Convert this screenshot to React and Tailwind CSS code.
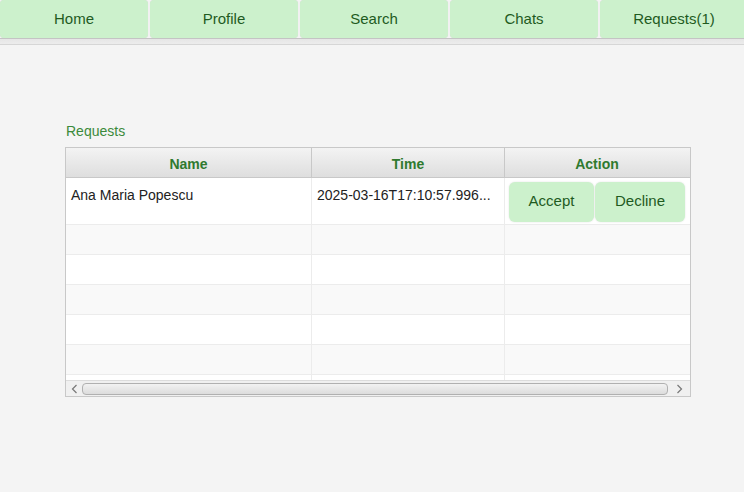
import React from "react";

const tabs = ["Home", "Profile", "Search", "Chats", "Requests(1)"];
const emptyRows = [1, 2, 3, 4, 5, 6];

const App = () => {
  return (
    <main className="w-full min-h-screen flex flex-col bg-[#f4f4f4] font-['Liberation_Sans',Arial,sans-serif]">
      {/* top nav */}
      <nav className="flex gap-[2px] h-[39px] border-b border-[#c4c4c4] overflow-hidden">
        {tabs.map(tab => (
          <button
            key={tab}
            className="w-[148px] shrink-0 h-[38px] rounded-[4px] bg-[#ccf1cc] text-[15px] text-[#1f5b1f] shadow-[0_0_1px_rgba(0,0,0,0.15)]"
          >
            {tab}
          </button>
        ))}
      </nav>
      <div className="h-[6px] bg-gradient-to-b from-[#e6e6e6] to-[#ececec] border-b border-[#d6d6d6]" />

      <section className="ml-[65px] w-[626px] mt-[78px] flex flex-col">
        <span className="text-[14px] leading-[16px] text-[#3b8a3b] ml-[1px] mb-[8px]">Requests</span>

        <div className="border border-[#c8c8c8] bg-white flex flex-col">
          {/* header */}
          <div className="flex h-[30px] pt-[3px] bg-gradient-to-b from-[#f3f3f3] to-[#dedede] border-b border-[#c8c8c8] text-[14px] font-bold text-[#2f7a2f]">
            <div className="w-[246px] flex items-center justify-center border-r border-[#c8c8c8] -mt-[3px]"><span className="pt-[3px]">Name</span></div>
            <div className="w-[193px] flex items-center justify-center border-r border-[#c8c8c8] -mt-[3px]"><span className="pt-[3px]">Time</span></div>
            <div className="w-[184px] flex items-center justify-center -mt-[3px]"><span className="pt-[3px]">Action</span></div>
          </div>

          {/* rows */}
          <div className="h-[202px] overflow-hidden flex flex-col text-[14px] text-[#222]">
            <div className="flex h-[47px] shrink-0 bg-white border-b border-[#ececec]">
              <div className="w-[246px] pl-[5px] pt-[7px] border-r border-[#ececec]">Ana Maria Popescu</div>
              <div className="w-[193px] pl-[5px] pt-[7px] border-r border-[#ececec] whitespace-nowrap">2025-03-16T17:10:57.996...</div>
              <div className="w-[184px] flex items-center pl-[4px] pt-[1px] gap-[1px]">
                <button className="w-[85px] h-[40px] rounded-[6px] bg-[#ccf1cc] text-[15px] text-[#1f5b1f] shadow-[0_0_2px_rgba(0,0,0,0.12)]">Accept</button>
                <button className="w-[90px] h-[40px] rounded-[6px] bg-[#ccf1cc] text-[15px] text-[#1f5b1f] shadow-[0_0_2px_rgba(0,0,0,0.12)]">Decline</button>
              </div>
            </div>
            {emptyRows.map(i => (
              <div key={i} className={`flex h-[30px] shrink-0 border-b border-[#ececec] ${i % 2 === 1 ? "bg-[#f9f9f9]" : "bg-white"}`}>
                <div className="w-[246px] border-r border-[#ececec]" />
                <div className="w-[193px] border-r border-[#ececec]" />
                <div className="w-[184px]" />
              </div>
            ))}
          </div>

          {/* horizontal scrollbar */}
          <div className="h-[16px] flex items-center bg-[#f0f0f0] border-t border-[#dcdcdc]">
            <div className="w-[16px] flex items-center justify-center">
              <svg width="7" height="10" viewBox="0 0 7 10"><path d="M5.5 1 L1.5 5 L5.5 9" fill="none" stroke="#777" strokeWidth="1.2" /></svg>
            </div>
            <div className="flex-1 h-[12px] rounded-[4px] border border-[#b0b0b0] bg-gradient-to-b from-[#f2f2f2] to-[#dcdcdc]" />
            <div className="w-[22px] flex items-center justify-center">
              <svg width="7" height="10" viewBox="0 0 7 10"><path d="M1.5 1 L5.5 5 L1.5 9" fill="none" stroke="#777" strokeWidth="1.2" /></svg>
            </div>
          </div>
        </div>
      </section>
    </main>
  );
};

export default App;
